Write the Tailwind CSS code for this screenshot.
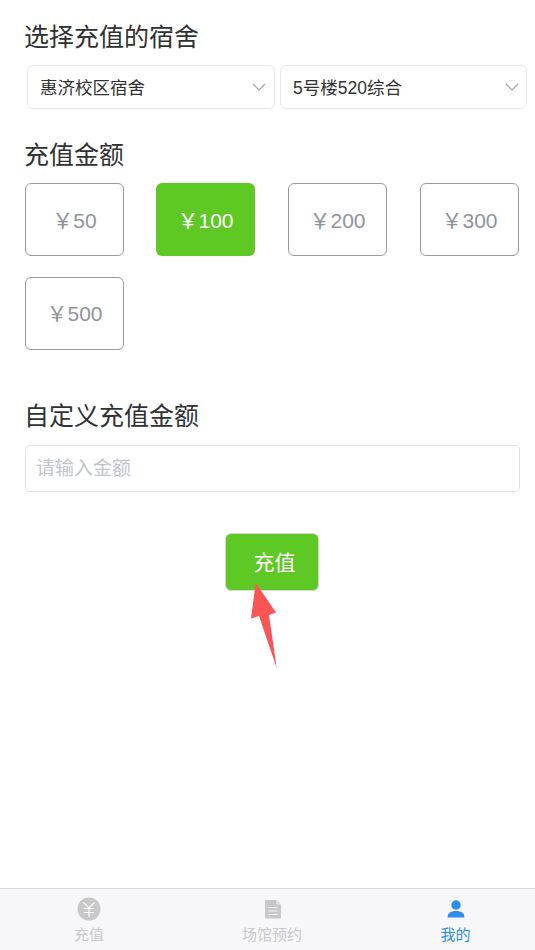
<!DOCTYPE html>
<html lang="zh-CN">
<head>
<meta charset="utf-8">
<script src="https://cdn.jsdelivr.net/npm/@tailwindcss/browser@4"></script>
</head>
<body class="bg-white font-['Liberation_Sans','Noto_Sans_CJK_SC',sans-serif]">
<div class="relative w-[535px] h-[950px] overflow-hidden flex flex-col">
  <main class="flex-1 px-[25px] pt-[20px]">
    <h2 class="text-[25px] leading-[33px] text-[#303133] -ml-px pt-px h-[33px]">选择充值的宿舍</h2>
    <div class="flex gap-[5px] mt-[12px] ml-[2px] -mr-[8px]">
      <div class="w-[248px] shrink-0 h-[44px] border border-[#e4e7ed] rounded-[6px] flex items-center justify-between pl-[12px] pr-[8px]">
        <span class="text-[17.5px] text-[#303133] pt-[2px]">惠济校区宿舍</span>
        <svg class="w-[14px] h-[8px]" viewBox="0 0 14 8" fill="none" stroke="#a0a3aa" stroke-width="1.2"><path d="M1 1l6 6 6-6"/></svg>
      </div>
      <div class="w-[247px] shrink-0 h-[44px] border border-[#e4e7ed] rounded-[6px] flex items-center justify-between pl-[12px] pr-[7px]">
        <span class="text-[17.5px] text-[#303133] pt-[2px]">5号楼520综合</span>
        <svg class="w-[14px] h-[8px]" viewBox="0 0 14 8" fill="none" stroke="#a0a3aa" stroke-width="1.2"><path d="M1 1l6 6 6-6"/></svg>
      </div>
    </div>
    <h2 class="text-[25px] leading-[33px] text-[#303133] mt-[30px] -ml-px">充值金额</h2>
    <div class="grid grid-cols-[131px_132px_132px_99px] gap-y-[21px] mt-[11px]">
      <div class="w-[99px] h-[73px] border border-[#9a9a9f] rounded-[6px] flex items-center justify-center pt-[2px] text-[21px] text-[#909399]">￥50</div>
      <div class="w-[99px] h-[73px] bg-[#5ec824] rounded-[6px] flex items-center justify-center pt-[2px] text-[21px] text-white">￥100</div>
      <div class="w-[99px] h-[73px] border border-[#9a9a9f] rounded-[6px] flex items-center justify-center pt-[2px] text-[21px] text-[#909399]">￥200</div>
      <div class="w-[99px] h-[73px] border border-[#9a9a9f] rounded-[6px] flex items-center justify-center pt-[2px] text-[21px] text-[#909399]">￥300</div>
      <div class="w-[99px] h-[73px] border border-[#9a9a9f] rounded-[6px] flex items-center justify-center text-[21px] text-[#909399]">￥500</div>
    </div>
    <h2 class="text-[25px] leading-[33px] text-[#303133] mt-[50px] -ml-px">自定义充值金额</h2>
    <div class="h-[47px] w-[495px] mt-[12px] border border-[#dcdfe6] rounded-[5px] flex items-center pl-[10px] pt-[2px] text-[19px] text-[#c0c4cc]">请输入金额</div>
    <div class="flex mt-[41px] ml-[200px]">
      <div class="w-[94px] h-[58px] bg-[#5ec824] border border-[#d4d9d0] rounded-[6px] flex items-center justify-center pl-[5px] pt-[2px] text-[21px] text-white">充值</div>
    </div>
  </main>
  <svg class="absolute left-[245px] top-[578px] w-[40px] h-[95px]" viewBox="245 578 40 95"><polygon points="255.7,583 276,612.5 269,615 276.7,668 259,616 251,618.5" fill="#fb5454"/></svg>
  <nav class="h-[62px] bg-[#f7f7fa] border-t border-[#d9d9d9] grid grid-cols-[178px_188px_179px] text-[15px] text-[#c8c8c8]">
    <div class="flex flex-col items-center pt-[8px]">
      <svg class="w-[24px] h-[24px]" viewBox="0 0 24 24"><circle cx="12" cy="12" r="11.5" fill="#c8c8c8"/><path d="M6.5 5.5L12 11l5.500-5.500M12 11v9M7 11.500h10M7 15.500h10" stroke="#fff" stroke-width="1.200" fill="none"/></svg>
      <span class="leading-[20px] mt-[4px]">充值</span>
    </div>
    <div class="flex flex-col items-center pt-[8px]">
      <svg class="w-[24px] h-[24px] ml-[2px]" viewBox="0 0 24 24"><path d="M5 3h10.500L20 7.500v13a1 1 0 0 1-1 1H5a1 1 0 0 1-1-1V4a1 1 0 0 1 1-1z" fill="#c8c8c8"/><path d="M16 3v4h4" fill="none" stroke="#f7f7fa" stroke-width=".8"/><path d="M7.500 10.500h9M7.500 14h9M7.500 17.500h9" stroke="#f2f2f2" stroke-width="1"/></svg>
      <span class="leading-[20px] mt-[4px]">场馆预约</span>
    </div>
    <div class="flex flex-col items-center pt-[8px] text-[#2d8cf0]">
      <svg class="w-[24px] h-[24px]" viewBox="0 0 24 24" fill="#2d8cf0"><circle cx="12" cy="8" r="4.700"/><path d="M3.500 20.500c0-4.500 3.500-6.500 8.500-6.500s8.500 2 8.500 6.500z"/></svg>
      <span class="leading-[20px] mt-[4px]">我的</span>
    </div>
  </nav>
</div>
</body>
</html>
